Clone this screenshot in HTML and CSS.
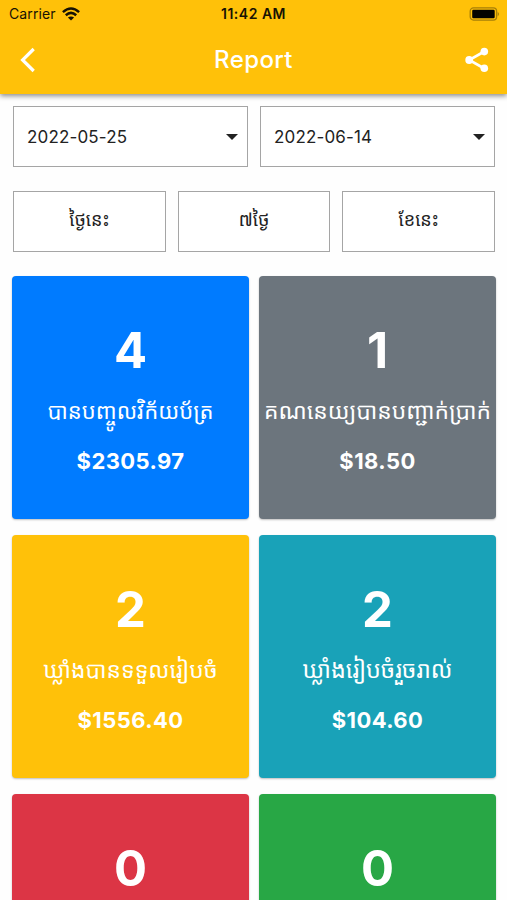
FILE: index.html
```html
<!DOCTYPE html>
<html lang="km">
<head>
<meta charset="utf-8">
<title>Report</title>
<link rel="stylesheet" href="styles.css">
</head>
<body>
<header class="header">
  <div class="status">
    <div class="status-left"><span class="carrier">Carrier</span>
      <svg class="wifi" width="18" height="14" viewBox="0 0 18 14" fill="none" stroke="#171204" stroke-width="2.5"><path d="M.9 5.1Q9-2.1 17.1 5.1"/><path d="M3.8 8.2Q9 3.6 14.2 8.2"/><path d="M9 13.6 5.9 10.5Q9 8.3 12.1 10.5Z" fill="#171204" stroke="none"/></svg>
    </div>
    <span class="time">11:42 AM</span>
    <svg class="battery" width="31" height="14" viewBox="0 0 31 14"><rect x="1.2" y=".9" width="26.4" height="12.2" rx="3.3" fill="none" stroke="#a77f09" stroke-width="1.3"/><rect x="3.2" y="2.7" width="22.5" height="8.6" rx="1.2" fill="#050400"/><path d="M28.7 4.7Q31.4 7 28.7 9.3Z" fill="#a77f09"/></svg>
  </div>
  <div class="nav">
    <svg class="back" width="16" height="26" viewBox="0 0 16 26"><path d="M13.7 2 2.6 13 13.7 24" fill="none" stroke="#fff" stroke-width="3.2"/></svg>
    <h1 class="title">Report</h1>
    <svg class="share" width="24" height="26" viewBox="0 0 24 26" fill="#fff"><path d="M19.3 4.5 4.2 13 19.3 21.5" fill="none" stroke="#fff" stroke-width="2.6"/><circle cx="19.3" cy="4.6" r="3.8"/><circle cx="4.2" cy="13" r="3.9"/><circle cx="19.3" cy="21.3" r="3.8"/></svg>
  </div>
</header>
<main>
  <div class="dates">
    <div class="date"><span>2022-05-25</span><i class="caret"></i></div>
    <div class="date"><span>2022-06-14</span><i class="caret"></i></div>
  </div>
  <div class="ranges">
    <div class="range">ថ្ងៃនេះ</div>
    <div class="range">៧ថ្ងៃ</div>
    <div class="range">ខែនេះ</div>
  </div>
  <div class="cards">
    <section class="card blue"><div class="count">4</div><div class="label compact">បានបញ្ចូលវិក័យប័ត្រ</div><div class="amount">$2305.97</div></section>
    <section class="card gray"><div class="count">1</div><div class="label">គណនេយ្យបានបញ្ជាក់ប្រាក់</div><div class="amount">$18.50</div></section>
    <section class="card yellow"><div class="count">2</div><div class="label">ឃ្លាំងបានទទួលរៀបចំ</div><div class="amount">$1556.40</div></section>
    <section class="card teal"><div class="count">2</div><div class="label wide">ឃ្លាំងរៀបចំរួចរាល់</div><div class="amount">$104.60</div></section>
    <section class="card red"><div class="count">0</div></section>
    <section class="card green"><div class="count">0</div></section>
  </div>
</main>
</body>
</html>
```
FILE: styles.css
```css
* { box-sizing: border-box; }
html, body { margin: 0; height: 900px; overflow: hidden; }
body { background: #fefefe; color: #222; font-family: Inter, "Noto Sans Khmer", "Khmer OS", sans-serif; }
svg { display: block; }
.header { position: relative; height: 94px; background: #ffc109; box-shadow: 0 2px 5px rgba(0,0,0,.45); }
.status { height: 27px; display: grid; grid-template-columns: 1fr auto 1fr; align-items: center; padding: 0 7px 0 9px; color: #171204; }
.status-left { display: flex; align-items: center; gap: 6px; }
.carrier { font-size: 14px; letter-spacing: .1px; }
.time { font-size: 14px; font-weight: 600; letter-spacing: .5px; margin-left: -2px; }
.battery { justify-self: end; }
.nav { height: 65px; display: grid; grid-template-columns: 1fr auto 1fr; align-items: center; padding: 0 18px 0 20px; }
.title { margin: 0 2px 0 0; color: #fff; font-size: 24px; line-height: 30px; font-weight: 500; letter-spacing: .4px; }
.share { justify-self: end; }
main { height: 806px; overflow: hidden; padding: 12px 11px 0 12px; }
.dates, .ranges { display: grid; padding: 0 1px; gap: 12px; }
.dates { grid-template-columns: repeat(2, 1fr); }
.ranges { grid-template-columns: repeat(3, 1fr); margin-top: 24px; }
.date, .range { height: 61px; border: 1px solid #a5a5a5; background: #fff; display: flex; align-items: center; }
.date { justify-content: space-between; padding: 0 9px 0 13px; font-size: 17px; letter-spacing: .15px; }
.caret { border: 6px solid transparent; border-top-color: #222; border-bottom: 0; }
.range { justify-content: center; font-size: 18px; font-weight: 400; padding-bottom: 6px; }
.cards { display: grid; grid-template-columns: repeat(2, 237px); gap: 16px 10px; margin-top: 24px; }
.card { height: 243px; border-radius: 4px; padding-top: 46px; color: #fff; text-align: center; box-shadow: 0 1px 2px rgba(0,0,0,.25); }
.count { font-size: 49px; line-height: 58px; font-weight: 700; }
.label { height: 50px; margin-top: 6px; line-height: 50px; font-size: 22.8px; font-weight: 400; white-space: nowrap; }
.compact { font-size: 22px; }
.wide { font-size: 23.4px; }
.amount { font-size: 22px; line-height: 28px; margin-top: 11px; font-weight: 700; letter-spacing: .4px; }
.blue { background: #007bff; }
.gray { background: #6c757d; }
.yellow { background: #ffc109; }
.teal { background: #19a2b8; }
.red { background: #dc3545; }
.green { background: #28a745; }
```
